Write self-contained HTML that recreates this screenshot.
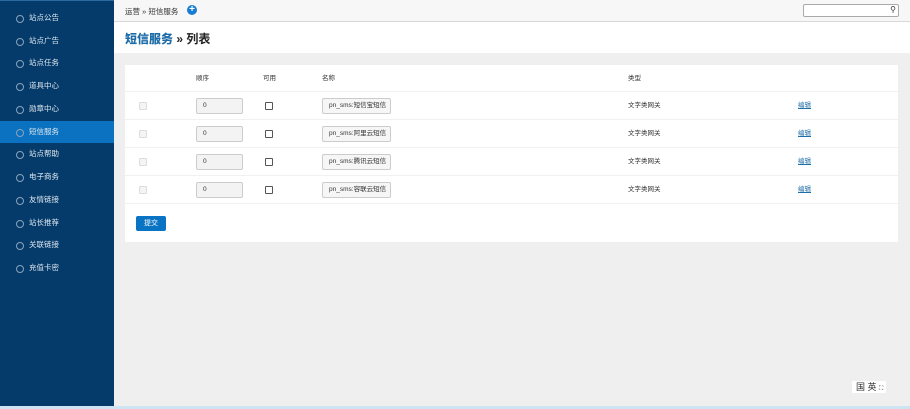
<!DOCTYPE html>
<html><head><meta charset="utf-8"><style>
*{margin:0;padding:0;box-sizing:border-box}
body{width:910px;height:409px;overflow:hidden;background:#efefef;font-family:"Liberation Sans","Noto Sans CJK SC",sans-serif;font-size:7px;color:#333;position:relative}
#side{position:absolute;left:0;top:0;width:114px;height:409px;background:#053b6b;border-top:1px solid #2a6aa0}
#side div{position:absolute;left:0;width:114px;height:22px;line-height:22px;color:#dfe8f0;font-size:7.5px;padding-left:29px}
#side div:before{content:"";position:absolute;left:16px;top:8px;width:6px;height:6px;border:0.6px solid #8aa3bb;border-radius:50%}
#side div.act{background:#0a72c0}
#top{position:absolute;left:114px;top:0;right:0;height:22px;background:#f7f7f7;border-bottom:1px solid #d8d8d8}
#crumb{position:absolute;left:11px;top:6px;font-size:7.5px}
#plus{position:absolute;left:73px;top:5px;width:10px;height:10px;border-radius:50%;background:#1a7cd0;color:#fff;font-size:10px;line-height:10px;text-align:center;font-weight:bold}
#search{position:absolute;left:689px;top:4px;width:96px;height:13px;border:1px solid #aaa;border-radius:2px;background:#fff}
#title{position:absolute;left:114px;top:22px;right:0;height:31px;background:#fff}
#title span{position:absolute;left:11px;top:8px;font-size:12px;font-weight:bold;color:#222}
#title b{color:#1e6da8}
#panel{position:absolute;left:125px;top:65px;width:773px;height:177px;background:#fff}
.row{position:absolute;left:0;width:773px;height:28px;border-bottom:1px solid #eef2f4}
.t{position:absolute;font-size:6.5px;line-height:8px}
.cb{position:absolute;width:8px;height:8px;border:1px solid #555;border-radius:1px;background:#fff}
.cbd{border-color:#ddd;background:#f4f4f4}
.inp{position:absolute;left:71px;width:47px;height:16px;border:1px solid #ccc;border-radius:2px;background:#f3f3f3;padding:0 6px;line-height:14px;font-size:6.5px}
.nm{position:absolute;left:197px;width:69px;height:16px;border:1px solid #ccc;border-radius:2px;background:#f6f6f6;padding:0 6px;line-height:14px;font-size:6.5px;white-space:nowrap;overflow:hidden}
.ed{position:absolute;left:673px;color:#1e6da8;text-decoration:underline;font-size:6.5px;line-height:8px}
#btn{position:absolute;left:11px;top:151px;width:30px;height:15px;background:#0a74c4;border-radius:2px;color:#fff;font-size:7px;line-height:15px;text-align:center}
#lang{position:absolute;left:852px;top:381px;width:34px;height:12px;background:#fff;font-size:9px;line-height:12px;padding-left:4px;white-space:nowrap}
#bot{position:absolute;left:0;top:406px;width:910px;height:3px;background:#cde4f3}
</style></head><body>
<div id="side">
<div style="top:6px">站点公告</div>
<div style="top:29px">站点广告</div>
<div style="top:51px">站点任务</div>
<div style="top:74px">道具中心</div>
<div style="top:97px">勋章中心</div>
<div class="act" style="top:120px">短信服务</div>
<div style="top:142px">站点帮助</div>
<div style="top:165px">电子商务</div>
<div style="top:188px">友情链接</div>
<div style="top:211px">站长推荐</div>
<div style="top:233px">关联链接</div>
<div style="top:256px">充值卡密</div>
</div>
<div id="top"><div id="crumb">运营 » 短信服务</div><div id="plus">+</div><div id="search"><span style="position:absolute;right:2px;top:0;font-size:8px">⚲</span></div></div>
<div id="title"><span><b>短信服务</b> » 列表</span></div>
<div id="panel">
<div class="row" style="top:0;height:27px"><span class="t" style="left:71px;top:10px">顺序</span><span class="t" style="left:138px;top:10px">可用</span><span class="t" style="left:197px;top:10px">名称</span><span class="t" style="left:503px;top:10px">类型</span></div>
<div class="row" style="top:27px"><div class="cb cbd" style="left:14px;top:10px"></div><div class="inp" style="top:6px">0</div><div class="cb" style="left:140px;top:10px"></div><div class="nm" style="top:6px">pn_sms:短信宝短信</div><span class="t" style="left:503px;top:10px">文字类网关</span><span class="ed" style="top:10px">编辑</span></div>
<div class="row" style="top:55px"><div class="cb cbd" style="left:14px;top:10px"></div><div class="inp" style="top:6px">0</div><div class="cb" style="left:140px;top:10px"></div><div class="nm" style="top:6px">pn_sms:阿里云短信</div><span class="t" style="left:503px;top:10px">文字类网关</span><span class="ed" style="top:10px">编辑</span></div>
<div class="row" style="top:83px"><div class="cb cbd" style="left:14px;top:10px"></div><div class="inp" style="top:6px">0</div><div class="cb" style="left:140px;top:10px"></div><div class="nm" style="top:6px">pn_sms:腾讯云短信</div><span class="t" style="left:503px;top:10px">文字类网关</span><span class="ed" style="top:10px">编辑</span></div>
<div class="row" style="top:111px"><div class="cb cbd" style="left:14px;top:10px"></div><div class="inp" style="top:6px">0</div><div class="cb" style="left:140px;top:10px"></div><div class="nm" style="top:6px">pn_sms:容联云短信</div><span class="t" style="left:503px;top:10px">文字类网关</span><span class="ed" style="top:10px">编辑</span></div>
<div id="btn">提交</div>
</div>
<div id="lang">国 英 <span style="font-size:6px">⛶</span></div>
<div id="bot"></div>
</body></html>
